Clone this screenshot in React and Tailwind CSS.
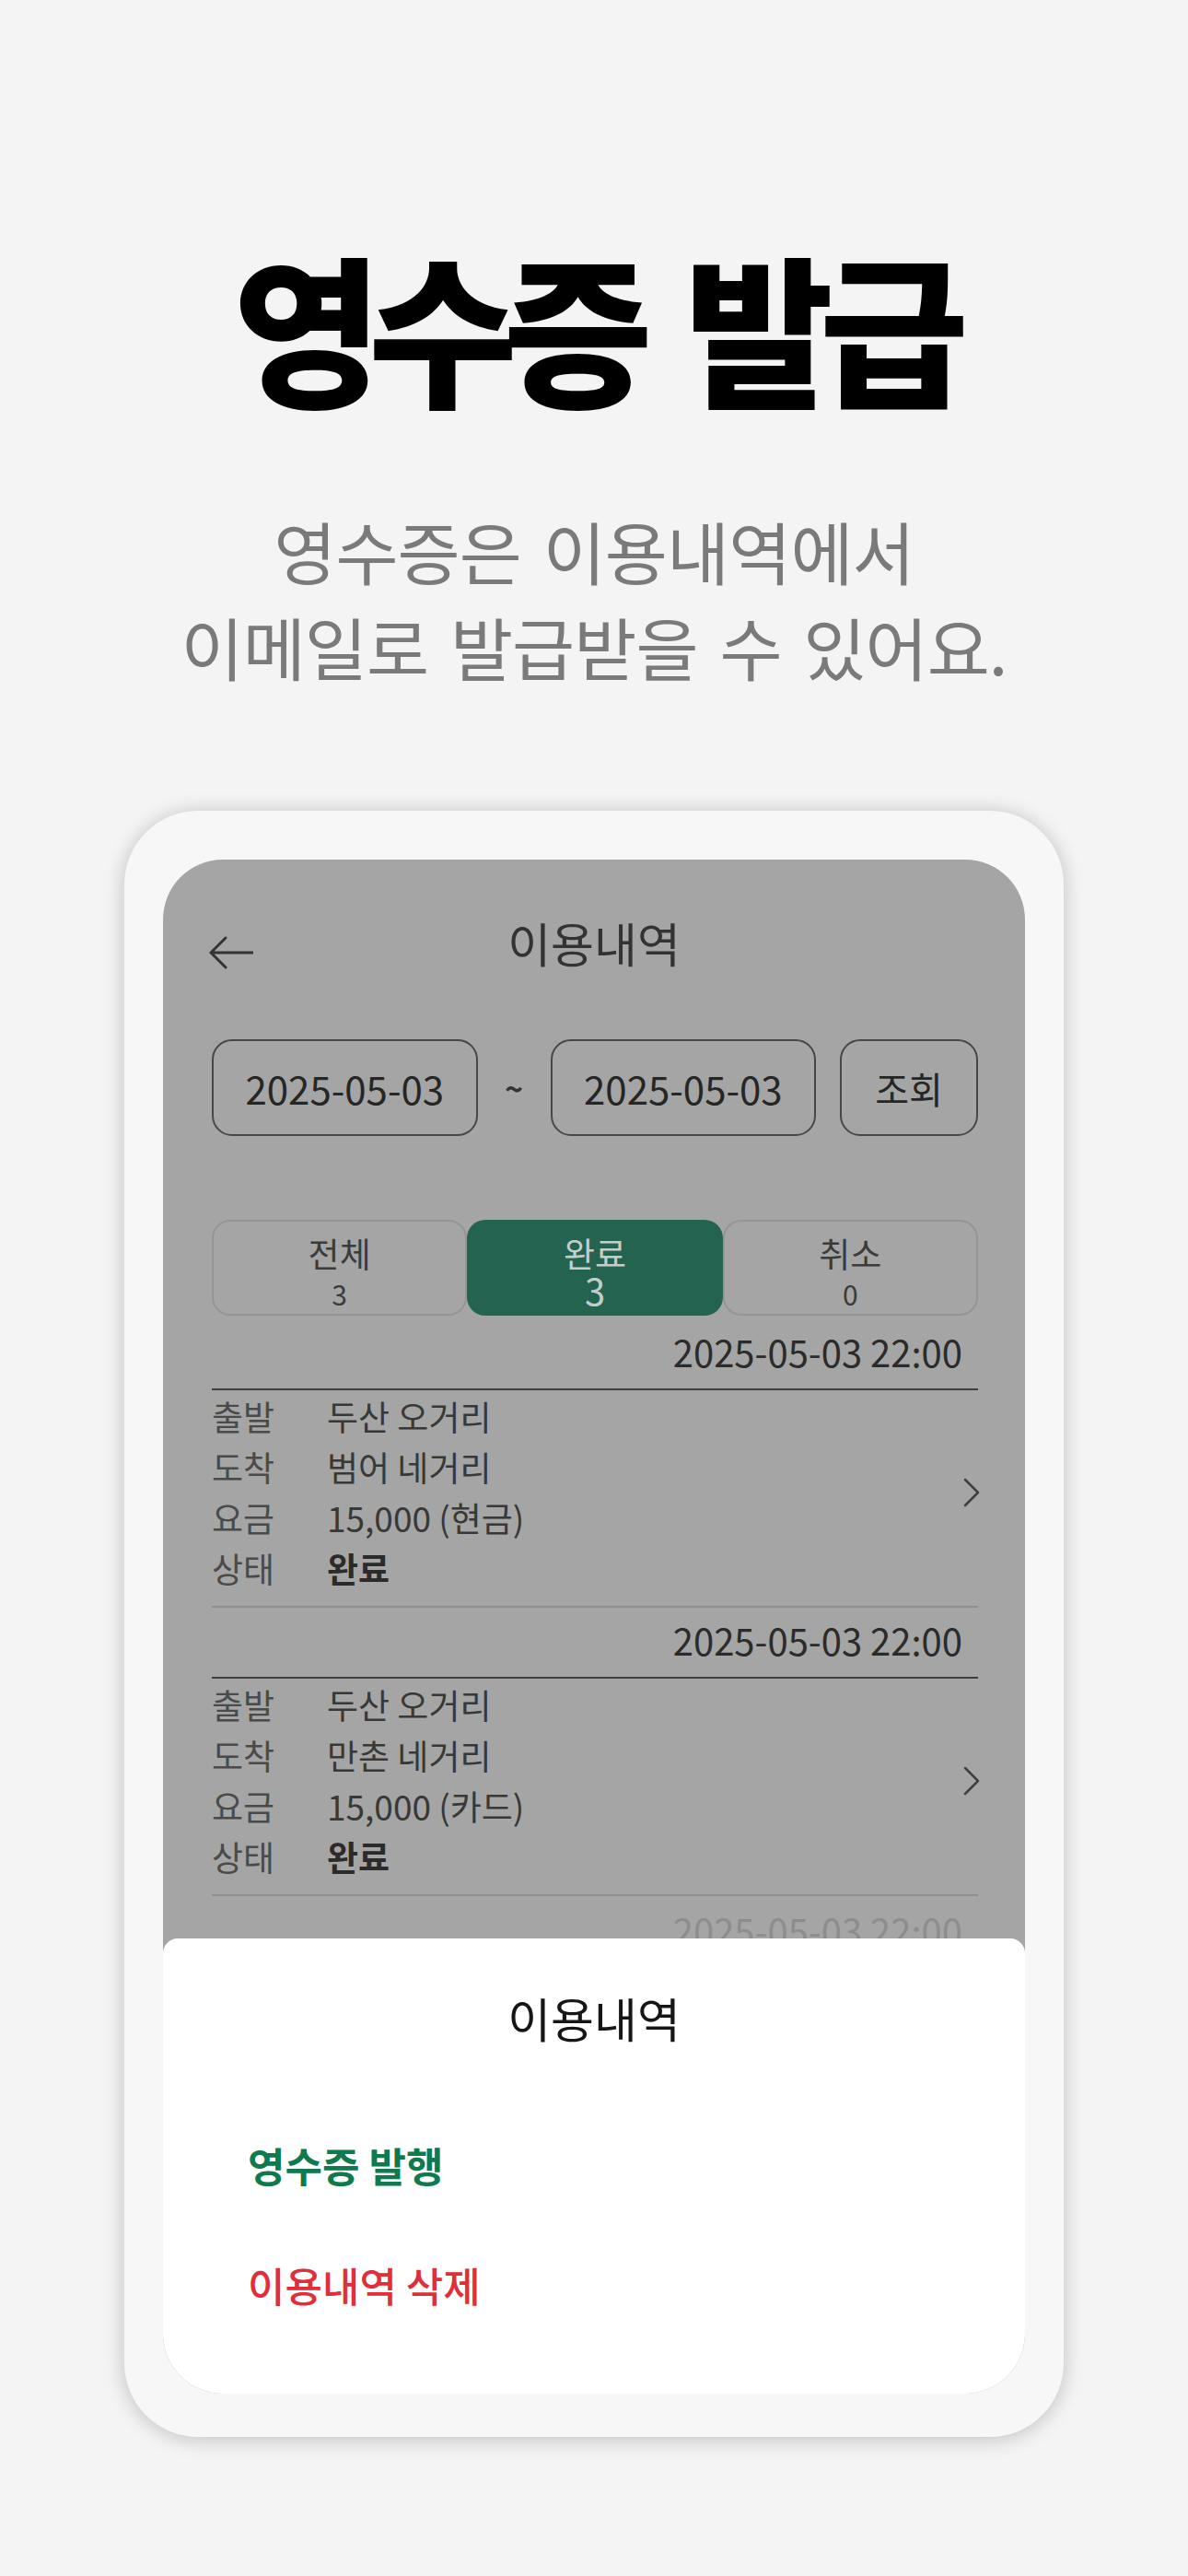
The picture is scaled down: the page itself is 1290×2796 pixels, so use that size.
import React from "react";

const cards = [
  { time: "2025-05-03 22:00", from: "두산 오거리", to: "범어 네거리", fare: "15,000 (현금)", status: "완료" },
  { time: "2025-05-03 22:00", from: "두산 오거리", to: "만촌 네거리", fare: "15,000 (카드)", status: "완료" },
];

function BackArrow() {
  return (
    <svg width="48" height="36" viewBox="0 0 48 36" fill="none" className="mt-[22px]">
      <path d="M2 18 H47 M18 2 L2 18 L18 34" stroke="#333" strokeWidth="3" strokeLinecap="round" strokeLinejoin="round" />
    </svg>
  );
}

function Chevron() {
  return (
    <svg width="20" height="32" viewBox="0 0 20 32" fill="none">
      <path d="M3 2 L17 16 L3 30" stroke="#3f3f3f" strokeWidth="2.5" strokeLinecap="round" strokeLinejoin="round" />
    </svg>
  );
}

function Row({ label, value, bold }) {
  return (
    <div className="flex items-center h-[55px] text-[37px]">
      <span className="w-[125px] text-[#4a4a4a]">{label}</span>
      <span className={bold ? "font-bold text-[#2b2b2b]" : "text-[#383838]"}>{value}</span>
    </div>
  );
}

function Card({ c }) {
  return (
    <div>
      <div className="h-[75px] pt-[11px] pr-[17px] text-right text-[40px] leading-[48px] text-[#2b2b2b]">{c.time}</div>
      <div className="h-[2px] bg-[#3f3f3f]" />
      <div className="flex items-center pt-[1px] pb-[13px]">
        <div className="flex-1">
          <Row label="출발" value={c.from} />
          <Row label="도착" value={c.to} />
          <Row label="요금" value={c.fare} />
          <Row label="상태" value={c.status} bold />
        </div>
        <div className="mr-[-3px]">
          <Chevron />
        </div>
      </div>
      <div className="h-[2px] bg-[#8f8f8f]" />
    </div>
  );
}

function Tab({ label, count, active }) {
  if (active) {
    return (
      <div className="rounded-[20px] bg-[#246350] flex flex-col items-center pt-[18px] text-[#c4cec9]">
        <span className="text-[37px] leading-[37px]">{label}</span>
        <span className="mt-[1px] text-[40px] leading-[40px]">{count}</span>
      </div>
    );
  }
  return (
    <div className="rounded-[20px] border-2 border-[#959595] flex flex-col items-center pt-[16px] text-[#3b3b3b]">
      <span className="text-[37px] leading-[37px]">{label}</span>
      <span className="mt-[10px] text-[30px] leading-[30px]">{count}</span>
    </div>
  );
}

export default function App() {
  return (
    <div className="w-[1290px] h-[2796px] bg-[#f4f4f4] font-['Noto_Sans_CJK_KR',sans-serif] overflow-hidden">
      <h1 className="pt-[265px] text-center text-[176px] leading-none font-black tracking-[-0.085em] [word-spacing:24px] text-black">
        영수증 발급
      </h1>
      <p className="mt-[104px] text-center text-[74px] leading-[104px] font-normal tracking-[-0.012em] [word-spacing:8px] text-[#7a7a7a]">
        영수증은 이용내역에서
        <br />
        이메일로 발급받을 수 있어요.
      </p>

      <div className="mt-[127px] mx-auto w-[1020px] rounded-[80px] bg-[#f7f7f7] pt-[53px] px-[42px] pb-[47px] shadow-[0_2px_22px_rgba(0,0,0,0.22)]">
        <div className="relative h-[1665px] rounded-[65px] overflow-hidden bg-[#a5a5a5]">
          {/* header */}
          <div className="mt-[55px] h-[70px] px-[50px] grid grid-cols-[1fr_auto_1fr] items-center">
            <BackArrow />
            <div className="text-[51px] leading-none text-[#333]">이용내역</div>
            <div />
          </div>

          <div className="pl-[53px] pr-[51px]">
            {/* date range */}
            <div className="mt-[70px] flex items-center">
              <div className="w-[289px] h-[105px] rounded-[22px] border-2 border-[#474747] flex items-center justify-center text-[42px] text-[#262626]">
                2025-05-03
              </div>
              <div className="w-[79px] text-center text-[34px] font-bold text-[#333]">~</div>
              <div className="w-[289px] h-[105px] rounded-[22px] border-2 border-[#474747] flex items-center justify-center text-[42px] text-[#262626]">
                2025-05-03
              </div>
              <div className="ml-[26px] w-[150px] h-[105px] rounded-[22px] border-2 border-[#474747] flex items-center justify-center text-[40px] text-[#262626]">
                조회
              </div>
            </div>

            {/* tabs */}
            <div className="mt-[91px] mb-[4px] grid grid-cols-3 h-[104px]">
              <Tab label="전체" count="3" />
              <Tab label="완료" count="3" active />
              <Tab label="취소" count="0" />
            </div>

            {cards.map((c, i) => (
              <Card key={i} c={c} />
            ))}
            <div className="pt-[13px] pr-[17px] text-right text-[40px] leading-[48px] text-[#8d8d8d]">2025-05-03 22:00</div>
          </div>

          {/* bottom sheet */}
          <div className="absolute inset-x-0 bottom-0 h-[494px] rounded-t-[16px] bg-white">
            <div className="pt-[56px] text-center text-[51px] leading-[60px] text-[#161616]">이용내역</div>
            <div className="pl-[92px]">
              <div className="mt-[102px] text-[44px] leading-[56px] font-bold text-[#0e7a4e]">영수증 발행</div>
              <div className="mt-[74px] text-[44px] leading-[56px] font-medium text-[#df2f3a]">이용내역 삭제</div>
            </div>
          </div>
        </div>
      </div>
    </div>
  );
}
